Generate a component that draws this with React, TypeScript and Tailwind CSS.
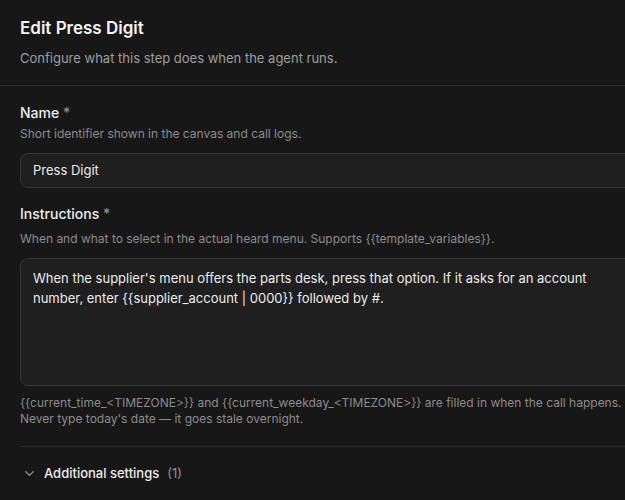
import React from "react";
import { ChevronDown } from "lucide-react";

export default function App() {
  return (
    <div className="h-[500px] w-[625px] overflow-hidden bg-[#171717] font-['Inter',sans-serif] antialiased">
      <div className="w-[720px]">
        <div className="border-b border-[#2c2c2c] px-5 pb-[17px] pt-4">
          <h1 className="text-[17px] font-semibold leading-6 text-[#f4f4f4]">Edit Press Digit</h1>
          <p className="mt-2 text-[13px] leading-5 text-[#9e9e9e]">
            Configure what this step does when the agent runs.
          </p>
        </div>
        <div className="px-5 pt-[17px]">
          <div className="text-sm font-medium leading-5 text-[#ededed]">
            Name <span className="text-[#8f8f8f]">*</span>
          </div>
          <div className="mt-[3px] text-xs leading-4 text-[#8c8c8c]">
            Short identifier shown in the canvas and call logs.
          </div>
          <div className="mt-[11px] flex h-[35px] items-center rounded-lg border border-[#363636] bg-[#1f1f1f] px-3 text-[13px] text-[#ececec]">
            Press Digit
          </div>

          <div className="mt-4 text-sm font-medium leading-5 text-[#ededed]">
            Instructions <span className="text-[#8f8f8f]">*</span>
          </div>
          <div className="mt-[7px] text-xs leading-4 text-[#8c8c8c]">
            When and what to select in the actual heard menu. Supports {"{{template_variables}}"}.
          </div>
          <div className="mt-[11px] h-[128px] rounded-lg border border-[#363636] bg-[#1f1f1f] py-[9px] pl-3 pr-[96px] text-[13px] leading-5 text-[#ececec]">
            When the supplier's menu offers the parts desk, press that option. If it asks for an account number, enter {"{{supplier_account | 0000}}"} followed by #.
          </div>
          <div className="mt-[9px] text-xs leading-4 text-[#8c8c8c]">
            {"{{current_time_<TIMEZONE>}}"} and {"{{current_weekday_<TIMEZONE>}}"} are filled in when the call happens.
            <br />
            Never type today's date — it goes stale overnight.
          </div>

          <div className="mt-[19px] border-t border-[#2c2c2c]" />
          <div className="flex items-center pt-4 text-[13px] leading-5">
            <ChevronDown className="ml-[2px] h-[15px] w-[15px] text-[#9a9a9a]" strokeWidth={2} />
            <span className="ml-[7px] font-medium text-[#ededed]">Additional settings</span>
            <span className="ml-2 text-[#8f8f8f]">(1)</span>
          </div>
        </div>
      </div>
    </div>
  );
}
